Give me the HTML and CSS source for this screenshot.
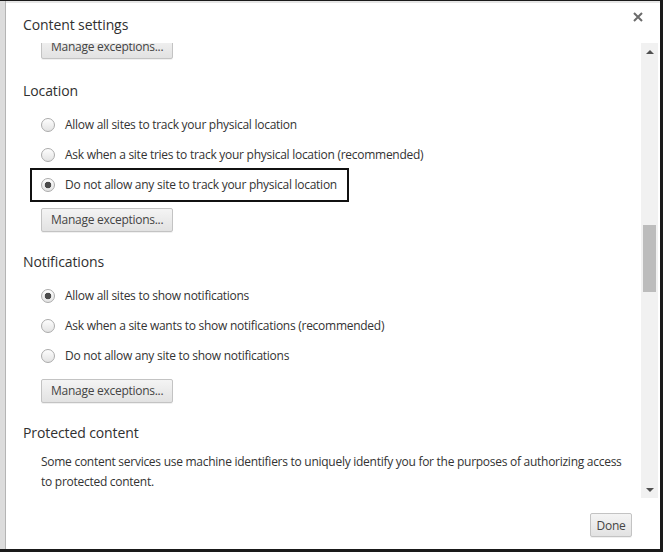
FILE: index.html
```html
<!DOCTYPE html>
<html lang="en">
<head>
  <meta charset="UTF-8">
  <meta name="viewport" content="width=device-width, initial-scale=1.0">
  <link rel="stylesheet" href="styles.css">
  <title>Content settings</title>
</head>
<body>

<div class="window">
  <div class="backdrop"></div>

  <div class="dialog">
    <div class="dialog-header">
      <h1 class="dialog-title">Content settings</h1>
      <button class="close" title="Close">
        <svg width="10" height="10" viewBox="0 0 10 10">
          <path d="M1 1 L9 9 M9 1 L1 9" stroke="#6b6b6b" stroke-width="2"/>
        </svg>
      </button>
    </div>

    <div class="dialog-body">
      <div class="content">
        <div class="scrolled">
          <button class="btn btn-top">Manage exceptions...</button>

          <section class="section">
            <h3>Location</h3>
            <label class="option"><input type="radio" name="location" class="radio"> Allow all sites to track your physical location</label>
            <label class="option"><input type="radio" name="location" class="radio"> Ask when a site tries to track your physical location (recommended)</label>
            <label class="option highlight"><input type="radio" name="location" class="radio" checked> Do not allow any site to track your physical location</label>
            <button class="btn">Manage exceptions...</button>
          </section>

          <section class="section">
            <h3>Notifications</h3>
            <label class="option"><input type="radio" name="notify" class="radio" checked> Allow all sites to show notifications</label>
            <label class="option"><input type="radio" name="notify" class="radio"> Ask when a site wants to show notifications (recommended)</label>
            <label class="option"><input type="radio" name="notify" class="radio"> Do not allow any site to show notifications</label>
            <button class="btn">Manage exceptions...</button>
          </section>

          <section class="section">
            <h3>Protected content</h3>
            <p class="desc">Some content services use machine identifiers to uniquely identify you for the purposes of authorizing access to protected content.</p>
          </section>
        </div>
      </div>

      <div class="scrollbar">
        <div class="sb-arrow"><span class="tri up"></span></div>
        <div class="sb-track"><div class="sb-thumb"></div></div>
        <div class="sb-arrow"><span class="tri down"></span></div>
      </div>
    </div>

    <div class="dialog-footer">
      <button class="btn btn-done">Done</button>
    </div>
  </div>
</div>

</body>
</html>
```

FILE: styles.css
```css
body {
  margin: 0;
  font-family: "Open Sans", "Noto Sans", sans-serif;
  color: #333;
  background: #1a1a1a;
}

.window {
  display: flex;
  width: 663px;
  height: 552px;
  box-sizing: border-box;
  padding: 1px 3px 3px 0;
  background: #1a1a1a;
}

.backdrop {
  width: 5px;
  background: #dcdcdc;
  border-right: 1px solid #b4b4b4;
}

.dialog {
  flex: 1;
  display: flex;
  flex-direction: column;
  background: #fff;
  border-top: 2px solid #e6e6e6;
}

.dialog-header {
  display: flex;
  justify-content: space-between;
  align-items: flex-start;
  height: 40px;
  box-sizing: border-box;
  padding: 9px 17px 0 17px;
}

.dialog-title {
  margin: 3px 0 0;
  font-size: 14px;
  font-weight: normal;
  line-height: 20px;
  letter-spacing: -0.1px;
  color: #303030;
}

.close {
  padding: 0;
  border: none;
  background: none;
  line-height: 0;
  cursor: pointer;
}

.dialog-body {
  display: flex;
  height: 455px;
}

.content {
  flex: 1;
  overflow: hidden;
  padding-left: 17px;
}

.scrolled {
  margin-top: -9px;
}

.btn-top {
  margin-bottom: 2px;
}

.section {
  margin-top: 20px;
}

.section h3 {
  margin: 0 0 9px;
  font-size: 14px;
  font-weight: normal;
  line-height: 20px;
  letter-spacing: -0.1px;
  color: #303030;
}

.option {
  display: flex;
  align-items: center;
  height: 30px;
  padding-left: 18px;
  font-size: 12px;
  letter-spacing: -0.27px;
  color: #333;
}

.option.highlight {
  width: fit-content;
  margin: -2px 0 -2px 7px;
  padding: 0 10px 0 9px;
  border: 2px solid #111;
}

.radio {
  appearance: none;
  -webkit-appearance: none;
  width: 14px;
  height: 14px;
  margin: 0 10px 0 0;
  border: 1px solid #ababab;
  border-radius: 50%;
  background: linear-gradient(#fdfdfd, #e3e3e3);
}

.radio:checked {
  background: radial-gradient(circle, #4b4b4b 0 3px, transparent 3.6px), linear-gradient(#fdfdfd, #e3e3e3);
}

.btn {
  height: 24px;
  padding: 0 9px;
  font-family: inherit;
  font-size: 12px;
  letter-spacing: -0.27px;
  color: #444;
  border: 1px solid #c3c3c3;
  border-radius: 2px;
  background: linear-gradient(#f4f4f4, #e2e2e2);
  box-shadow: 0 1px 0 rgba(0, 0, 0, 0.06);
}

.section .btn,
.btn-top {
  margin-left: 18px;
}

.section .btn {
  margin-top: 8px;
}

.desc {
  margin: 0;
  padding-left: 18px;
  max-width: 590px;
  font-size: 12px;
  line-height: 20px;
  letter-spacing: -0.27px;
  color: #333;
}

.scrollbar {
  display: flex;
  flex-direction: column;
  width: 17px;
  margin-right: 2px;
  background: #f1f1f1;
}

.sb-arrow {
  display: flex;
  justify-content: center;
  align-items: center;
  height: 17px;
}

.tri {
  width: 0;
  height: 0;
  border-left: 4px solid transparent;
  border-right: 4px solid transparent;
}

.tri.up {
  border-bottom: 4px solid #505050;
}

.tri.down {
  border-top: 4px solid #505050;
}

.sb-track {
  flex: 1;
  padding: 0 2px;
}

.sb-thumb {
  margin-top: 165px;
  height: 67px;
  background: #bcbcbc;
}

.dialog-footer {
  display: flex;
  justify-content: flex-end;
  flex: 1;
  padding: 15px 28px 0 0;
}

.btn-done {
  width: 42px;
  padding: 0;
}
```
